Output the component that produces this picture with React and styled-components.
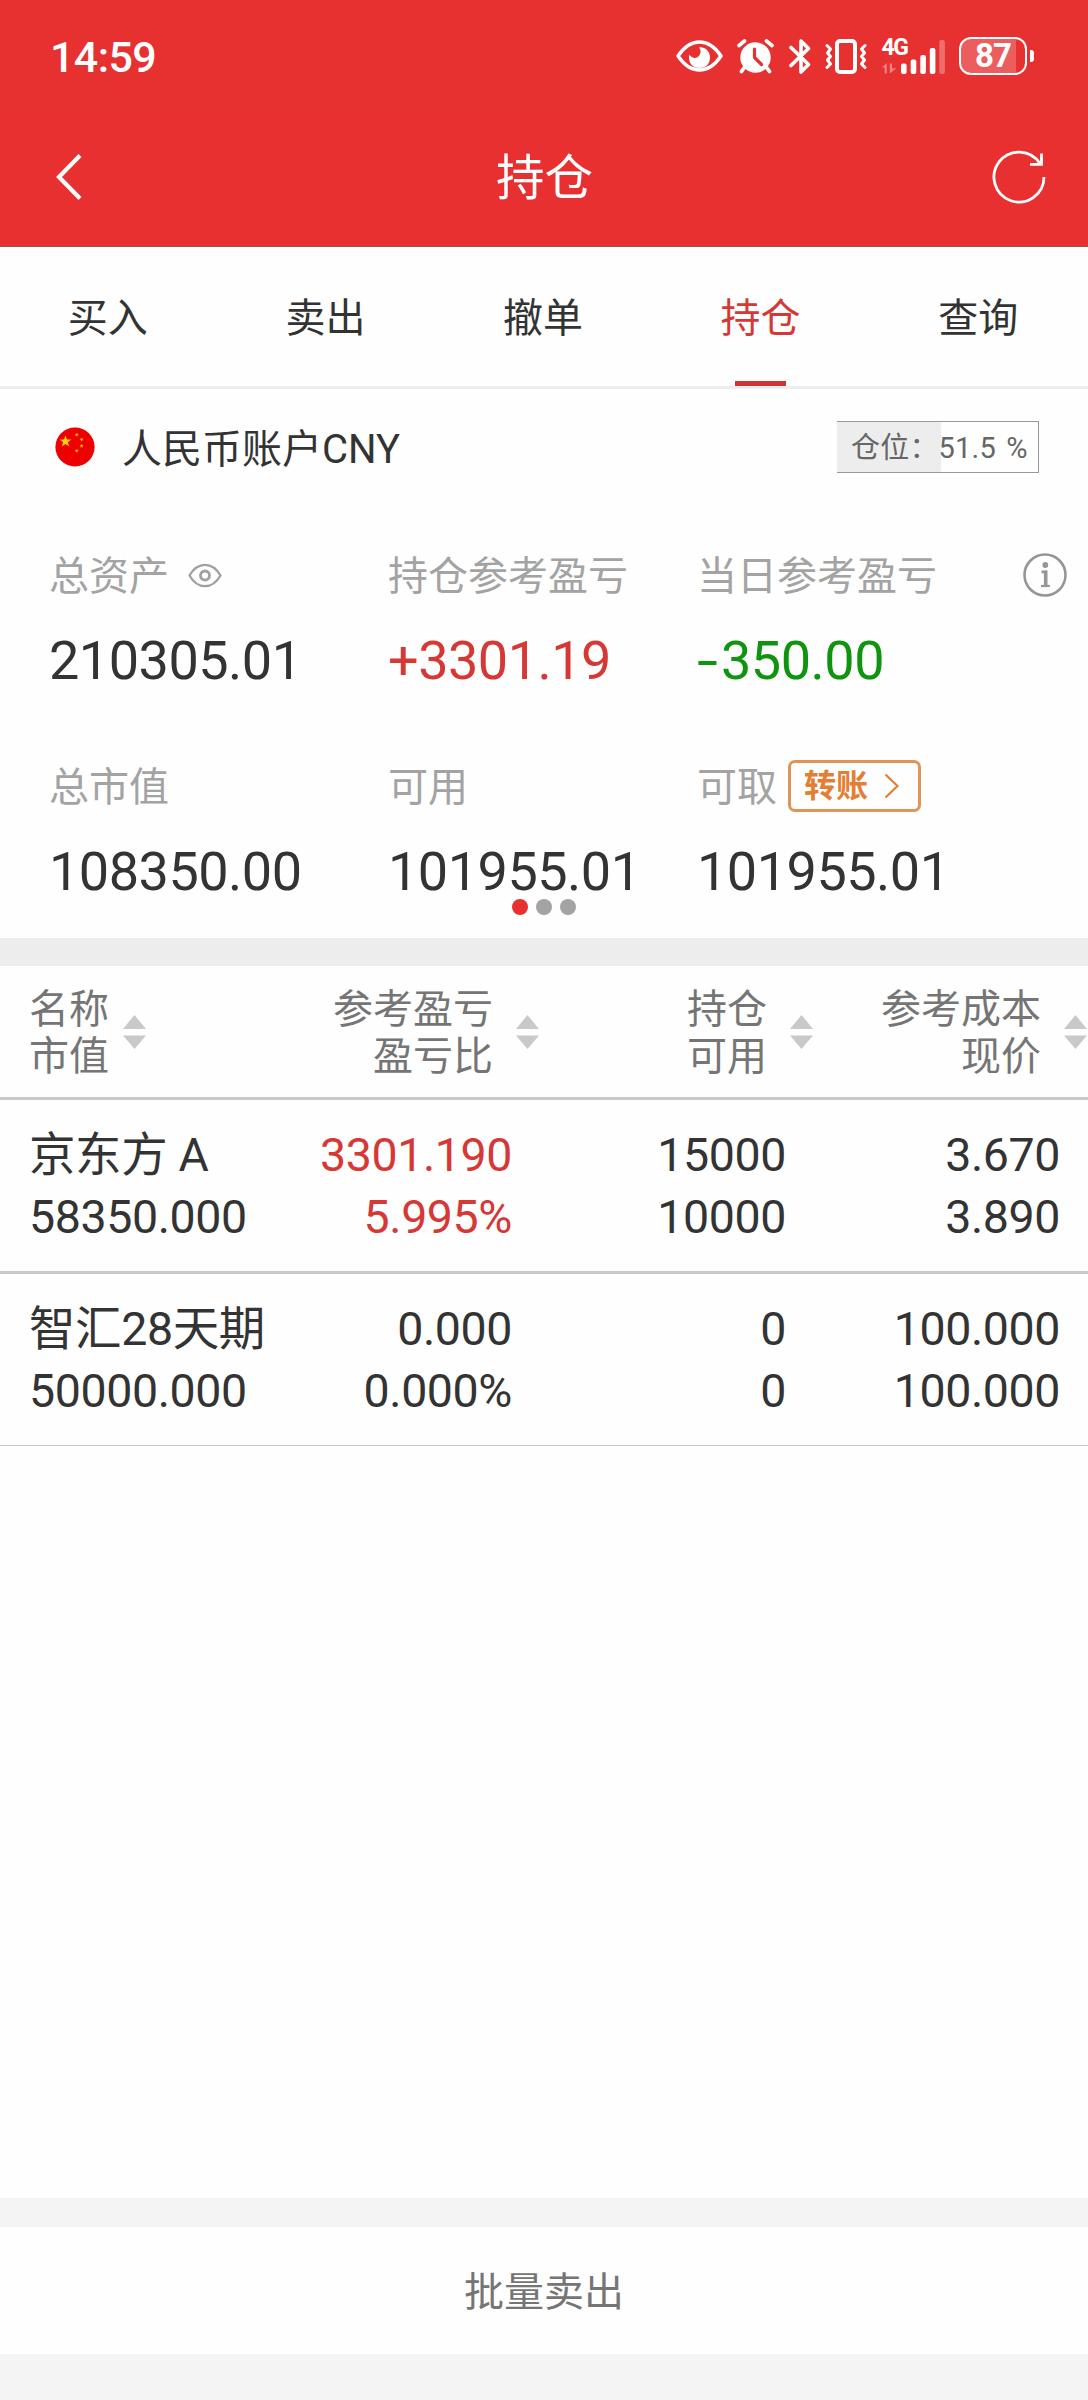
import styled, { createGlobalStyle, css } from "styled-components";

const TABS = ['买入', '卖出', '撤单', '持仓', '查询'];

const COLUMNS = [
    ['名称', '市值'],
    ['参考盈亏', '盈亏比'],
    ['持仓', '可用'],
    ['参考成本', '现价'],
];

const HOLDINGS = [
    {
        name: '京东方 A',
        marketValue: '58350.000',
        profit: '3301.190',
        profitRate: '5.995%',
        amount: '15000',
        available: '10000',
        cost: '3.670',
        price: '3.890',
        trend: 'up',
    },
    {
        name: '智汇28天期',
        marketValue: '50000.000',
        profit: '0.000',
        profitRate: '0.000%',
        amount: '0',
        available: '0',
        cost: '100.000',
        price: '100.000',
    },
];

const EyeStatusIcon = () => (
    <svg width="47" height="32" viewBox="0 0 47 32" fill="none">
        <path d="M2 16C8 7 15 2 23.500 2S39 7 45 16C39 25 32 30 23.500 30S8 25 2 16Z" stroke="#fff" strokeWidth="3.400" strokeLinejoin="round" />
        <path d="M23 7.500C28 6.500 34 10.500 34 17.500C34 24 29.500 28 23.500 28S13 24 13 17.500C13 16.500 13.200 15.600 13.500 14.800C15.500 18.500 21 19 23.300 15.600C25.200 12.600 25 9.500 23 7.500Z" fill="#fff" />
    </svg>
);

const AlarmIcon = () => (
    <svg width="37" height="35" viewBox="0 0 37 35" fill="none" stroke="#fff" strokeLinecap="round">
        <circle cx="18.500" cy="18.500" r="15.200" fill="#fff" stroke="none" />
        <path d="M2 6.500L7.500 2M35 6.500L29.500 2" strokeWidth="3.600" />
        <path d="M7 29L4.500 32.500M30 29L32.500 32.500" strokeWidth="3.800" />
        <path d="M17.500 10V18.500L24.500 25.500" stroke="#e83030" strokeWidth="3.200" strokeLinejoin="round" />
    </svg>
);

const BluetoothIcon = () => (
    <svg width="22" height="35" viewBox="0 0 22 35" fill="none" stroke="#fff" strokeWidth="3.600" strokeLinecap="round" strokeLinejoin="round">
        <path d="M2 8.500L19.500 25.500L12 33V2L19.500 9.500L2 26.500" />
    </svg>
);

const VibrateIcon = () => (
    <svg width="42" height="35" viewBox="0 0 42 35" fill="none" stroke="#fff" strokeLinecap="round" strokeLinejoin="round">
        <rect x="12" y="2" width="18" height="31" rx="3" strokeWidth="4" />
        <path d="M2 6.500L5.500 10L2.500 14L5.500 17.500L2.500 21L5.500 25L2 28.500M40 6.500L36.500 10L39.500 14L36.500 17.500L39.500 21L36.500 25L40 28.500" strokeWidth="3" />
    </svg>
);

const SignalBars = () => (
    <svg width="63" height="35" viewBox="0 0 63 35" fill="#fff">
        <path d="M0 28.500L4.800 24V34.500H2.600V28.500ZM7.800 24.500H10V29.500L14.500 29L7.800 34.500Z" opacity=".4" />
        <rect x="19" y="24.500" width="5.600" height="10.500" rx="2" />
        <rect x="28.700" y="20.500" width="5.600" height="14.500" rx="2" />
        <rect x="38.300" y="16" width="5.600" height="19" rx="2" />
        <rect x="47.800" y="9" width="5.600" height="26" rx="2" />
        <rect x="57.300" y="1" width="5.600" height="34" rx="2" opacity=".3" />
    </svg>
);

const BackIcon = () => (
    <svg width="30" height="50" viewBox="0 0 30 50" fill="none">
        <path d="M26 3.500L5 25L26 46.500" stroke="#fff" strokeWidth="4.200" />
    </svg>
);

const RefreshIcon = () => (
    <svg width="54" height="54" viewBox="0 0 54 54" fill="none" stroke="#fff" strokeWidth="2.800">
        <path d="M52 27A25 25 0 1 1 48 13.500" />
        <path d="M49.500 3.500V14.300H38" />
    </svg>
);

const Star = ({ x, y, r, turn = 0 }) => (
    <path
        transform={`translate(${x} ${y}) rotate(${turn}) scale(${r})`}
        d="M0-1L.225-.309L.951-.309L.363.118L.588.809L0 .382L-.588.809L-.363.118L-.951-.309L-.225-.309Z"
        fill="#ffd400"
    />
);

const FlagIcon = () => (
    <svg width="40" height="40" viewBox="0 0 40 40">
        <circle cx="20" cy="20" r="19.600" fill="#ee0000" />
        <Star x={10.5} y={14.5} r={6.3} />
        <Star x={21.700} y={7.800} r={2.200} turn={20} />
        <Star x={26.600} y={12.500} r={2.200} turn={40} />
        <Star x={26.600} y={19} r={2.200} />
        <Star x={21.700} y={23.800} r={2.200} turn={20} />
    </svg>
);

const EyeIcon = () => (
    <svg width="34" height="25" viewBox="0 0 34 25" fill="none" stroke="#a0a0a0">
        <path d="M1.500 12.500C5.500 5.500 10.500 1.800 17 1.800S28.500 5.500 32.500 12.500C28.500 19.500 23.500 23.200 17 23.200S5.500 19.500 1.500 12.500Z" strokeWidth="2.300" />
        <circle cx="17" cy="12.500" r="4.500" strokeWidth="2.800" />
    </svg>
);

const InfoIcon = () => (
    <svg width="44" height="44" viewBox="0 0 44 44" fill="none" stroke="#969696">
        <circle cx="22" cy="22" r="20.500" strokeWidth="2.600" />
        <circle cx="22.300" cy="12" r="2.900" fill="#969696" stroke="none" />
        <path d="M18.500 18.800H22.300V33" strokeWidth="2.800" />
        <path d="M23 17.500V33" strokeWidth="3" />
        <path d="M18 33H26.800" strokeWidth="2.200" />
    </svg>
);

const ChevronIcon = () => (
    <svg width="16" height="26" viewBox="0 0 16 26" fill="none">
        <path d="M1.500 1.500L13.500 13L1.500 24.500" stroke="#e27f35" strokeWidth="2.200" />
    </svg>
);

const SortIcon = () => (
    <svg width="23" height="34" viewBox="0 0 23 34" fill="#c9c9c9">
        <path d="M11.500 0L23 14H0ZM11.500 34L23 20.500H0Z" />
    </svg>
);

const App = () => (
    <>
        <GlobalStyle />
        <Page>
            <StatusBar>
                <Clock>14:59</Clock>
                <StatusIcons>
                    <EyeStatusIcon />
                    <AlarmIcon />
                    <BluetoothIcon />
                    <VibrateIcon />
                    <Signal>
                        <Network>4G</Network>
                        <SignalBars />
                    </Signal>
                    <Battery><BatteryBody>87</BatteryBody></Battery>
                </StatusIcons>
            </StatusBar>

            <TitleBar>
                <BackIcon />
                <h1>持仓</h1>
                <RefreshIcon />
            </TitleBar>

            <TabBar>
                {TABS.map((tab) => (
                    <Tab key={tab} $active={tab === '持仓'}>{tab}</Tab>
                ))}
            </TabBar>

            <Account>
                <AccountRow>
                    <FlagIcon />
                    <AccountName>人民币账户CNY</AccountName>
                    <PositionBadge>仓位：51.5 %</PositionBadge>
                </AccountRow>
                <Stats>
                    <div>
                        <StatLabel $gap="19px">总资产 <EyeIcon /></StatLabel>
                        <StatValue>210305.01</StatValue>
                    </div>
                    <div>
                        <StatLabel>持仓参考盈亏</StatLabel>
                        <StatValue $trend="up">+3301.19</StatValue>
                    </div>
                    <div>
                        <StatLabel $spread>当日参考盈亏 <InfoIcon /></StatLabel>
                        <StatValue $trend="down"><Minus>-</Minus>350.00</StatValue>
                    </div>
                    <div>
                        <StatLabel>总市值</StatLabel>
                        <StatValue>108350.00</StatValue>
                    </div>
                    <div>
                        <StatLabel>可用</StatLabel>
                        <StatValue>101955.01</StatValue>
                    </div>
                    <div>
                        <StatLabel $gap="11px">
                            可取
                            <TransferButton>转账 <ChevronIcon /></TransferButton>
                        </StatLabel>
                        <StatValue>101955.01</StatValue>
                    </div>
                </Stats>
                <Pager>
                    <Dot $active />
                    <Dot />
                    <Dot />
                </Pager>
            </Account>

            <TableHead>
                {COLUMNS.map(([top, bottom]) => (
                    <HeadCell key={top}>
                        <span>{top}<br />{bottom}</span>
                        <SortIcon />
                    </HeadCell>
                ))}
            </TableHead>
            {HOLDINGS.map((item) => (
                <HoldingRow key={item.name}>
                    <Cell>{item.name}<br />{item.marketValue}</Cell>
                    <Cell $trend={item.trend}>{item.profit}<br />{item.profitRate}</Cell>
                    <Cell>{item.amount}<br />{item.available}</Cell>
                    <Cell>{item.cost}<br />{item.price}</Cell>
                </HoldingRow>
            ))}

            <Footer>
                <BatchSell>批量卖出</BatchSell>
            </Footer>
        </Page>
    </>
);

export default App

const GlobalStyle = createGlobalStyle`
    * {
        box-sizing: border-box;
    }

    body {
        margin: 0;
        background: #fefefe;
        color: #333;
        font-family: Roboto, "Noto Sans CJK SC", sans-serif;
    }

    svg {
        display: block;
        flex-shrink: 0;
    }
`;

const trendColor = css`
    color: ${({ $trend }) => ({ up: '#d63836', down: '#0f940f' })[$trend] || '#333'};
`;

const Page = styled.div`
    display: flex;
    flex-direction: column;
    width: 1088px;
    height: 2400px;
    overflow: hidden;
`;

const StatusBar = styled.div`
    display: flex;
    align-items: center;
    justify-content: space-between;
    height: 108px;
    padding: 4px 54px 0 50px;
    background: #e73030;
    color: #fff;
`;

const Clock = styled.div`
    padding-top: 2px;
    font-size: 43px;
    font-weight: 500;
    line-height: 60px;
    letter-spacing: -.6px;
`;

const StatusIcons = styled.div`
    display: flex;
    align-items: center;
    gap: 14.500px;
`;

const Signal = styled.div`
    position: relative;
`;

const Network = styled.span`
    position: absolute;
    top: -1px;
    left: 0;
    font-size: 23px;
    font-weight: 700;
    line-height: 20px;
    letter-spacing: -1.500px;
`;

const Battery = styled.div`
    display: flex;
    align-items: center;
    gap: 3px;

    &::after {
        content: '';
        width: 4px;
        height: 12px;
        border-radius: 0 3px 3px 0;
        background: #fff;
    }
`;

const BatteryBody = styled.div`
    width: 68px;
    height: 38px;
    border: 2.500px solid #fff;
    border-radius: 12px;
    background: linear-gradient(90deg, rgba(255, 255, 255, .22) 55px, transparent 55px);
    font-size: 33px;
    font-weight: 700;
    line-height: 34px;
    letter-spacing: -1px;
    text-align: center;
`;

const TitleBar = styled.header`
    display: flex;
    align-items: center;
    justify-content: space-between;
    height: 139px;
    padding: 0 42px 0 54px;
    border-bottom: 1px solid #96564e;
    background: #e83030;
    color: #fff;

    h1 {
        margin: 3px 0 0 13px;
        font-size: 48.500px;
        font-weight: 400;
        line-height: 60px;
    }
`;

const TabBar = styled.nav`
    display: flex;
    height: 142px;
    border-bottom: 3px solid #ededed;
`;

const Tab = styled.div`
    display: flex;
    flex: 1;
    flex-direction: column;
    align-items: center;
    padding: 42px 2px 0 0;
    font-size: 40px;
    line-height: 60px;
    color: ${({ $active }) => ($active ? '#d63836' : '#333')};

    &::after {
        content: '';
        width: 51px;
        height: 5px;
        margin-top: auto;
        background: ${({ $active }) => ($active ? '#cd3434' : 'transparent')};
    }
`;

const Account = styled.section`
    position: relative;
    height: 577px;
    border-bottom: 28px solid #ededed;
`;

const AccountRow = styled.div`
    display: flex;
    align-items: center;
    height: 116px;
    padding: 0 49px 0 55px;
`;

const AccountName = styled.div`
    margin: 6px auto 0 27px;
    font-size: 40px;
    line-height: 60px;
`;

const PositionBadge = styled.div`
    width: 202px;
    height: 52px;
    padding-left: 14px;
    border: solid #999;
    border-width: 1px 1px 1px 0;
    background: linear-gradient(90deg, #ededed 104px, transparent 104px) border-box;
    color: #666;
    font-size: 29px;
    line-height: 52px;
    letter-spacing: .2px;
    word-spacing: 3px;
    white-space: nowrap;
`;

const Stats = styled.div`
    display: grid;
    grid-template-columns: 339px 309px 1fr;
    row-gap: 62px;
    padding: 42px 21px 0 49px;
`;

const StatLabel = styled.div`
    display: flex;
    align-items: center;
    justify-content: ${({ $spread }) => ($spread ? 'space-between' : 'flex-start')};
    gap: ${({ $gap }) => $gap || 0};
    height: 60px;
    color: #a3a3a3;
    font-size: 40px;
    line-height: 60px;

    svg {
        margin-bottom: 4px;
    }
`;

const StatValue = styled.div`
    ${trendColor}
    margin-top: 19px;
    font-size: 54px;
    line-height: 70px;
    letter-spacing: -.5px;
`;

const Minus = styled.span`
    display: inline-block;
    width: 24px;
    transform: scaleX(1.4);
    transform-origin: left;
`;

const TransferButton = styled.button`
    display: flex;
    align-items: center;
    gap: 16px;
    width: 133px;
    height: 52px;
    margin: 0 0 4px;
    padding: 0 0 0 13px;
    border: 3px solid #e09455;
    border-radius: 7px;
    background: none;
    color: #e27f35;
    font: 700 32px/48px Roboto, "Noto Sans CJK SC", sans-serif;

    svg {
        margin-bottom: 0;
    }
`;

const Pager = styled.div`
    position: absolute;
    bottom: 23px;
    left: 512px;
    display: flex;
    gap: 8px;
`;

const Dot = styled.i`
    width: 16px;
    height: 16px;
    border-radius: 50%;
    background: ${({ $active }) => ($active ? '#e83030' : '#a3a3a3')};
`;

const TableHead = styled.div`
    display: grid;
    grid-template-columns: 266px repeat(3, 274px);
    height: 134px;
    border-bottom: 3px solid #c9c9c9;
`;

const HeadCell = styled.div`
    display: flex;
    align-items: center;
    justify-content: flex-end;
    gap: 23px;
    padding-right: 1px;
    color: #757575;
    font-size: 40px;
    line-height: 47px;
    text-align: right;

    span {
        padding-top: 2px;
    }

    &:first-child {
        justify-content: flex-start;
        gap: 14px;
        padding-left: 29px;
        text-align: left;
    }
`;

const HoldingRow = styled.div`
    display: grid;
    grid-template-columns: 266px repeat(3, 274px);
    height: 174px;
    padding-top: 24px;
    border-bottom: 3px solid #c9c9c9;

    & + & {
        height: 172px;
        border-bottom-width: 1px;
    }
`;

const Cell = styled.div`
    ${trendColor}
    padding-right: 28px;
    font-size: 46.500px;
    line-height: 62px;
    letter-spacing: -.4px;
    text-align: right;
    white-space: nowrap;

    &:first-child {
        padding: 0 0 0 29px;
        text-align: left;
    }
`;

const Footer = styled.footer`
    margin-top: auto;
    border: solid #f4f4f4;
    border-width: 29px 0 46px;
`;

const BatchSell = styled.div`
    height: 127px;
    padding-top: 2px;
    color: #757575;
    font-size: 40px;
    line-height: 127px;
    text-align: center;
`;
